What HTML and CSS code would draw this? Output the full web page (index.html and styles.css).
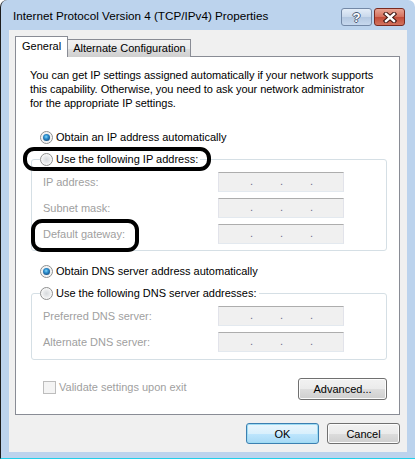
FILE: index.html
```html
<!DOCTYPE html>
<html>
<head>
<meta charset="utf-8">
<title>Internet Protocol Version 4 (TCP/IPv4) Properties</title>
<link rel="stylesheet" href="styles.css">
</head>
<body>
<div class="window">
    <div class="titlebar">
        <span class="title">Internet Protocol Version 4 (TCP/IPv4) Properties</span>
        <div class="caption-buttons">
            <span class="cap-btn help">?</span>
            <span class="cap-btn close">
                <svg width="14" height="11" viewBox="0 0 14 11">
                    <path d="M3 2 L11 9 M11 2 L3 9" stroke="#3b1510" stroke-width="4.4" stroke-linecap="square"/>
                    <path d="M3 2 L11 9 M11 2 L3 9" stroke="#fff" stroke-width="2.4" stroke-linecap="square"/>
                </svg>
            </span>
        </div>
    </div>

    <div class="client">
        <div class="tabs">
            <span class="tab active">General</span>
            <span class="tab">Alternate Configuration</span>
        </div>

        <div class="panel">
            <p class="intro">You can get IP settings assigned automatically if your network supports<br>this capability. Otherwise, you need to ask your network administrator<br>for the appropriate IP settings.</p>

            <div class="option option-ip"><span class="radio checked"></span>Obtain an IP address automatically</div>

            <fieldset class="group group-ip">
                <legend><span class="radio"></span>Use the following IP address:</legend>
                <div class="field"><span class="field-label">IP address:</span><span class="ipbox"><i>.</i><i>.</i><i>.</i></span></div>
                <div class="field"><span class="field-label">Subnet mask:</span><span class="ipbox"><i>.</i><i>.</i><i>.</i></span></div>
                <div class="field"><span class="field-label">Default gateway:</span><span class="ipbox"><i>.</i><i>.</i><i>.</i></span></div>
            </fieldset>

            <div class="option option-dns"><span class="radio checked"></span>Obtain DNS server address automatically</div>

            <fieldset class="group group-dns">
                <legend><span class="radio"></span>Use the following DNS server addresses:</legend>
                <div class="field"><span class="field-label">Preferred DNS server:</span><span class="ipbox"><i>.</i><i>.</i><i>.</i></span></div>
                <div class="field"><span class="field-label">Alternate DNS server:</span><span class="ipbox"><i>.</i><i>.</i><i>.</i></span></div>
            </fieldset>

            <div class="panel-foot">
                <div class="check"><span class="checkbox"></span>Validate settings upon exit</div>
                <span class="btn advanced">Advanced...</span>
            </div>
        </div>

        <div class="dialog-buttons">
            <span class="btn default">OK</span>
            <span class="btn">Cancel</span>
        </div>
    </div>

    <!-- hand drawn marks over the screenshot -->
    <div class="mark mark-ip"></div>
    <div class="mark mark-gateway"></div>
</div>
</body>
</html>
```

FILE: styles.css
```css
*{
    padding: 0;
    margin: 0;
    box-sizing: border-box;
}
body{
    background: #ffffff;
    font-family: "Liberation Sans", "Noto Sans", sans-serif;
    font-size: 11px;
    color: #000;
}
.window{
    position: relative;
    width: 415px;
    height: 459px;
    display: flex;
    flex-direction: column;
    background: #bcd3ed;
    border-left: 1px solid #1c1c1c;
    border-bottom: 1px solid #22d0ea;
    border-radius: 7px 7px 0 0;
    padding: 0 8px 6px 8px;
}
.titlebar{
    height: 30px;
    display: flex;
    align-items: flex-start;
    justify-content: space-between;
}
.title{
    margin-top: 9px;
    margin-left: 4px;
    font-size: 11.7px;
}
.caption-buttons{
    display: flex;
    gap: 2px;
    margin-top: 8px;
    margin-right: 2px;
}
.cap-btn{
    width: 31px;
    height: 18px;
    border-radius: 3px;
    display: flex;
    align-items: center;
    justify-content: center;
}
.help{
    border: 1px solid #7388a6;
    background: linear-gradient(#e4edf8, #c9d8eb 50%, #b3c7e0 51%, #c7d8ee);
    color: #fff;
    font-weight: bold;
    font-size: 13px;
    text-shadow: 1px 0 #4a5c78, -1px 0 #4a5c78, 0 1px #4a5c78, 0 -1px #4a5c78;
}
.close{
    border: 1px solid #7a2a20;
    background: linear-gradient(#e8a493, #d4705e 50%, #c24b38 51%, #d2735e);
}
.client{
    flex: 1;
    background: #f0f0f0;
    padding: 6px 7px 0 6px;
    display: flex;
    flex-direction: column;
}
.tabs{
    display: flex;
    align-items: flex-end;
    height: 21px;
    position: relative;
    z-index: 1;
    margin-bottom: -1px;
}
.tab{
    height: 18px;
    padding: 0 4px 0 5px;
    border: 1px solid #898c95;
    border-bottom: none;
    border-left: none;
    background: linear-gradient(#f2f2f2, #ebebeb 50%, #dddddd 51%, #cfcfcf);
    line-height: 17px;
}
.tab.active{
    height: 21px;
    padding: 0 6px;
    border-left: 1px solid #898c95;
    background: #ffffff;
    line-height: 19px;
}
.panel{
    height: 359px;
    background: #ffffff;
    border: 1px solid #898c95;
    padding: 11px 12px 0 14px;
}
.intro{
    line-height: 14px;
    white-space: nowrap;
    letter-spacing: -0.04px;
}
.option{
    display: flex;
    align-items: center;
    height: 16px;
    margin-left: 10px;
}
.option-ip{
    margin-top: 19px;
}
.option-dns{
    margin-top: 12px;
}
.radio{
    width: 13px;
    height: 13px;
    border-radius: 50%;
    border: 1px solid #8e8f8f;
    background: radial-gradient(circle at 50% 50%, #d7dadd 0, #e7e9eb 3px, #f6f6f6 5px, #ffffff 6px);
    margin-right: 3px;
    position: relative;
    flex: none;
}
.radio.checked::after{
    content: "";
    position: absolute;
    left: 2px;
    top: 2px;
    width: 7px;
    height: 7px;
    border-radius: 50%;
    background: radial-gradient(circle at 45% 40%, #86d8f7 0, #2d8fd0 2px, #1c5b8f 4px);
}
.group{
    margin-left: 1px;
    border: 1px solid #d5dfe5;
    border-radius: 3px;
    padding: 0 0 6px 0;
}
.group-ip{
    margin-top: 6px;
}
.group-dns{
    margin-top: 6px;
    padding-bottom: 7px;
}
.group legend{
    display: flex;
    align-items: center;
    height: 16px;
    margin-left: 8px;
    padding-right: 2px;
}
.field{
    display: flex;
    align-items: center;
    height: 20px;
    margin-top: 6px;
    padding-left: 11px;
    color: #a0a0a0;
}
.group .field:first-of-type{
    margin-top: 5px;
}
.field-label{
    width: 175px;
}
.ipbox{
    width: 126px;
    height: 20px;
    background: #f0f0f0;
    border: 1px solid;
    border-color: #adadad #e2e3ea #e3e9ef #e2e3ea;
    display: flex;
    padding-left: 31px;
    gap: 27px;
}
.ipbox i{
    font-style: normal;
    color: #6e6e8c;
    width: 3px;
    line-height: 17px;
}
.panel-foot{
    display: flex;
    justify-content: space-between;
    align-items: center;
    margin-top: 18px;
}
.check{
    display: flex;
    align-items: center;
    margin-left: 13px;
    color: #a0a0a0;
    margin-top: -4px;
}
.checkbox{
    width: 13px;
    height: 13px;
    border: 1px solid #bdbdbd;
    background: #f4f4f4;
    margin-right: 3px;
}
.btn{
    display: flex;
    align-items: center;
    justify-content: center;
    width: 73px;
    height: 21px;
    border: 1px solid #707070;
    border-radius: 3px;
    background: linear-gradient(#f2f2f2, #ebebeb 50%, #dddddd 51%, #cfcfcf);
    box-shadow: inset 0 0 0 1px #fcfcfc;
}
.advanced{
    width: 89px;
    height: 22px;
}
.dialog-buttons{
    display: flex;
    justify-content: flex-end;
    gap: 8px;
    margin-top: 8px;
}
.btn.default{
    border-color: #3c7fb1;
    box-shadow: inset 0 0 0 1px #9fdcf3;
    background: linear-gradient(#eaf6fd, #d9f0fc 50%, #bee6fd 51%, #a7d9f5);
}
.mark{
    position: absolute;
    border: 4px solid #000;
    border-radius: 11px;
}
.mark-ip{
    left: 22px;
    top: 147px;
    width: 188px;
    height: 24px;
}
.mark-gateway{
    left: 30px;
    top: 219px;
    width: 108px;
    height: 33px;
}
```
